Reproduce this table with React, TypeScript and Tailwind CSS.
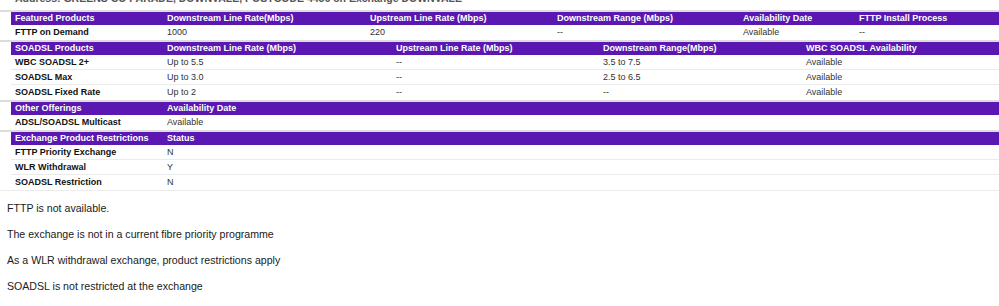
const font = { fontFamily: '"Liberation Sans", Arial, Helvetica, sans-serif' };

type Table = {
  cols: string;
  head: string[];
  rows: string[][];
};

const tables: Table[] = [
  {
    cols: "grid-cols-[152px_203px_187px_186px_116px_1fr]",
    head: [
      "Featured Products",
      "Downstream Line Rate(Mbps)",
      "Upstream Line Rate (Mbps)",
      "Downstream Range (Mbps)",
      "Availability Date",
      "FTTP Install Process",
    ],
    rows: [["FTTP on Demand", "1000", "220", "--", "Available", "--"]],
  },
  {
    cols: "grid-cols-[152px_229px_207px_203px_1fr]",
    head: [
      "SOADSL Products",
      "Downstream Line Rate (Mbps)",
      "Upstream Line Rate (Mbps)",
      "Downstream Range(Mbps)",
      "WBC SOADSL Availability",
    ],
    rows: [
      ["WBC SOADSL 2+", "Up to 5.5", "--", "3.5 to 7.5", "Available"],
      ["SOADSL Max", "Up to 3.0", "--", "2.5 to 6.5", "Available"],
      ["SOADSL Fixed Rate", "Up to 2", "--", "--", "Available"],
    ],
  },
  {
    cols: "grid-cols-[152px_1fr]",
    head: ["Other Offerings", "Availability Date"],
    rows: [["ADSL/SOADSL Multicast", "Available"]],
  },
  {
    cols: "grid-cols-[152px_1fr]",
    head: ["Exchange Product Restrictions", "Status"],
    rows: [
      ["FTTP Priority Exchange", "N"],
      ["WLR Withdrawal", "Y"],
      ["SOADSL Restriction", "N"],
    ],
  },
];

const notes = [
  "FTTP is not available.",
  "The exchange is not in a current fibre priority programme",
  "As a WLR withdrawal exchange, product restrictions apply",
  "SOADSL is not restricted at the exchange",
];

function ProductTable({ t }: { t: Table }) {
  return (
    <div className="border-t-2 border-[#dcdcdc]">
      <div className="pl-[11px]">
        {/* header */}
        <div className={`grid ${t.cols} h-[13px] items-center bg-[#5a17b1] text-white font-bold text-[9px] leading-[11px]`}>
          {t.head.map((h) => (
            <div key={h} className="pl-[4px] whitespace-nowrap">
              {h}
            </div>
          ))}
        </div>
        {/* rows */}
        {t.rows.map((r, i) => (
          <div
            key={i}
            className={`grid ${t.cols} h-[15px] items-center text-[9px] leading-[11px] ${
              i < t.rows.length - 1 ? "border-b border-[#ebebeb]" : ""
            }`}
          >
            {r.map((c, j) => (
              <div
                key={j}
                className={`pl-[4px] whitespace-nowrap ${j === 0 ? "font-bold text-[#111]" : "text-[#333]"}`}
              >
                {c}
              </div>
            ))}
          </div>
        ))}
      </div>
    </div>
  );
}

export default function App() {
  return (
    <div className="w-[999px] h-[306px] overflow-hidden bg-white" style={font}>
      {/* cut-off address line */}
      <div className="h-[5px] overflow-hidden pl-[15px]">
        <div className="-mt-[8px] text-[10.5px] leading-[13px] font-bold text-[#555] whitespace-nowrap">
          Address: GREENS CO PARADE, DOWNVALE, POSTCODE 4456 on Exchange DOWNVALE
        </div>
      </div>
      <div className="h-[5px]" />

      <div className="flex flex-col">
        {tables.map((t, i) => (
          <ProductTable key={i} t={t} />
        ))}
        <div className="border-t border-[#ebebeb]" />
      </div>

      <div className="flex flex-col gap-[11px] pt-[10px] pl-[7px] text-[10.6px] leading-[15px] text-[#1a1a1a]">
        {notes.map((n) => (
          <p key={n}>{n}</p>
        ))}
      </div>
    </div>
  );
}
